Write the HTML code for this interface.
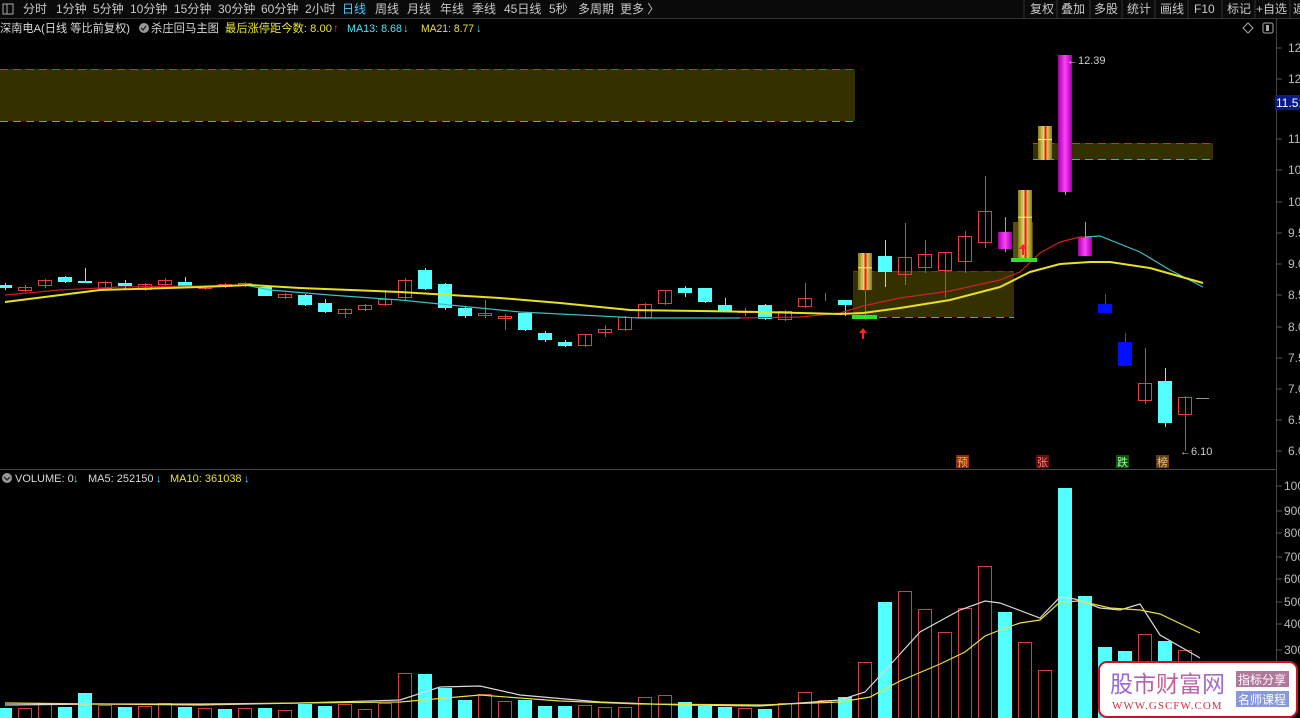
<!DOCTYPE html>
<html><head><meta charset="utf-8"><style>
html,body{margin:0;padding:0;background:#000;width:1300px;height:718px;overflow:hidden;font-family:"Liberation Sans","Noto Sans CJK SC",sans-serif;}
svg{position:absolute;left:0;top:0}
.t{font-family:"Liberation Sans","Noto Sans CJK SC",sans-serif;}
</style></head><body>
<svg id="s" width="1300" height="718" xmlns="http://www.w3.org/2000/svg">
<defs>
<linearGradient id="yg" x1="0" x2="1" y1="0" y2="0"><stop offset="0" stop-color="#8a7a18"/><stop offset="0.5" stop-color="#f6ec80"/><stop offset="1" stop-color="#8a7a18"/></linearGradient>
<linearGradient id="mg" x1="0" x2="1" y1="0" y2="0"><stop offset="0" stop-color="#a000a0"/><stop offset="0.5" stop-color="#ff40ff"/><stop offset="1" stop-color="#a000a0"/></linearGradient>
<linearGradient id="lg" x1="0" x2="1" y1="0" y2="0"><stop offset="0" stop-color="#8a6ae0"/><stop offset="0.5" stop-color="#c86090"/><stop offset="1" stop-color="#9a70d0"/></linearGradient>
</defs>
<rect x="0" y="0" width="1300" height="18" fill="#0a0a0a"/>
<line x1="0" y1="18.5" x2="1300" y2="18.5" stroke="#333"/>
<rect x="3" y="4" width="10" height="10" fill="none" stroke="#aaa"/><line x1="7" y1="4" x2="7" y2="14" stroke="#aaa"/>
<g class="t" font-size="12" fill="#c8c8c8">
<text x="23" y="13">分时</text><text x="56" y="13">1分钟</text><text x="93" y="13">5分钟</text><text x="130" y="13">10分钟</text><text x="174" y="13">15分钟</text><text x="218" y="13">30分钟</text><text x="261" y="13">60分钟</text><text x="305" y="13">2小时</text>
<text x="342" y="13" fill="#4fc8ff">日线</text><text x="375" y="13">周线</text><text x="407" y="13">月线</text><text x="440" y="13">年线</text><text x="472" y="13">季线</text><text x="504" y="13">45日线</text><text x="549" y="13">5秒</text><text x="578" y="13">多周期</text><text x="620" y="13">更多 〉</text>
<text x="1030" y="13">复权</text><text x="1061" y="13">叠加</text><text x="1094" y="13">多股</text><text x="1127" y="13">统计</text><text x="1160" y="13">画线</text><text x="1194" y="13">F10</text><text x="1227" y="13">标记</text><text x="1256" y="13">+自选</text><text x="1293" y="13">返</text>
</g>
<g stroke="#333"><line x1="1024" y1="0" x2="1024" y2="18"/><line x1="1057" y1="0" x2="1057" y2="18"/><line x1="1090" y1="0" x2="1090" y2="18"/><line x1="1122" y1="0" x2="1122" y2="18"/><line x1="1155" y1="0" x2="1155" y2="18"/><line x1="1188" y1="0" x2="1188" y2="18"/><line x1="1222" y1="0" x2="1222" y2="18"/><line x1="1255" y1="0" x2="1255" y2="18"/><line x1="1290" y1="0" x2="1290" y2="18"/></g>
<g class="t" font-size="11.3">
<text x="0" y="32" fill="#d8d8d8" textLength="130" lengthAdjust="spacingAndGlyphs">深南电A(日线 等比前复权)</text>
<circle cx="144" cy="28" r="5" fill="#999"/><path d="M141 28 l2 2 l3 -4" stroke="#222" fill="none" stroke-width="1.3"/>
<text x="151" y="32" fill="#d8d8d8" textLength="68" lengthAdjust="spacingAndGlyphs">杀庄回马主图</text>
<text x="225" y="32" fill="#e6e040" textLength="107" lengthAdjust="spacingAndGlyphs">最后涨停距今数: 8.00</text><text x="333" y="32" fill="#ff3030">↑</text>
<text x="347" y="32" fill="#54e0f0" textLength="55" lengthAdjust="spacingAndGlyphs">MA13: 8.68</text><text x="403" y="32" fill="#54e0f0">↓</text>
<text x="421" y="32" fill="#e6e040" textLength="53" lengthAdjust="spacingAndGlyphs">MA21: 8.77</text><text x="476" y="32" fill="#54e0f0">↓</text>
</g>
<path d="M1248 23 l5 5 l-5 5 l-5 -5z" fill="none" stroke="#aaa"/>
<rect x="1263" y="23" width="10" height="10" rx="2" fill="none" stroke="#aaa"/><rect x="1266" y="25" width="3" height="6" fill="#aaa"/>
<line x1="1276.5" y1="19" x2="1276.5" y2="718" stroke="#444"/>
<line x1="0" y1="469.5" x2="1276" y2="469.5" stroke="#444"/>
<g id="ax" class="t" font-size="12" fill="#bbb"></g>
<rect x="1275" y="95" width="25" height="15" fill="#0a1a8a"/><text x="1276" y="107" class="t" font-size="12" fill="#fff">11.51</text>
<rect x="0" y="69" width="855" height="52" fill="#353000"/>
<line x1="0" y1="69.5" x2="855" y2="69.5" stroke="#d03030" stroke-dasharray="8,5"/>
<line x1="0" y1="121.5" x2="855" y2="121.5" stroke="#3cb0b0" stroke-dasharray="8,5"/>
<rect x="853" y="271" width="161" height="46" fill="#353000"/>
<line x1="853" y1="271.5" x2="1014" y2="271.5" stroke="#803020" stroke-dasharray="8,5"/>
<line x1="853" y1="317.5" x2="1014" y2="317.5" stroke="#3cb0b0" stroke-dasharray="8,5"/>
<rect x="1033" y="143" width="180" height="17" fill="#353000"/>
<line x1="1033" y1="143.5" x2="1213" y2="143.5" stroke="#d03030" stroke-dasharray="8,5"/>
<line x1="1033" y1="159.5" x2="1213" y2="159.5" stroke="#3cb0b0" stroke-dasharray="8,5"/>
<rect x="1013" y="222" width="20" height="36" fill="#5a4a10"/>
<g id="cd"></g>
<g id="ma"></g>
<g id="vol"></g>
<rect x="852" y="315" width="25" height="4" fill="#30e030"/>
<rect x="1011" y="258" width="26" height="4" fill="#30e030"/>
<path d="M863 328 l-4 5 h3 v6 h2 v-6 h3z" fill="#ff2020"/>
<path d="M1023 244 l-4 5 h3 v6 h2 v-6 h3z" fill="#ff2020"/>
<line x1="1196" y1="398.5" x2="1209" y2="398.5" stroke="#999"/>
<text x="1067" y="64" class="t" font-size="11" fill="#ccc">←12.39</text>
<text x="1180" y="455" class="t" font-size="11" fill="#ccc">←6.10</text>
<g class="t" font-size="11">
<rect x="956" y="455" width="13" height="13" fill="#8a3010"/><text x="957" y="466" fill="#ffb060">预</text>
<rect x="1036" y="455" width="13" height="13" fill="#601010"/><text x="1037" y="466" fill="#ff8080">张</text>
<rect x="1116" y="455" width="13" height="13" fill="#105010"/><text x="1117" y="466" fill="#a0ffa0">跌</text>
<rect x="1156" y="455" width="13" height="13" fill="#604010"/><text x="1157" y="466" fill="#ffc080">榜</text>
</g>
<g class="t" font-size="11">
<circle cx="7" cy="478" r="5" fill="#999"/><path d="M4 477 l3 3 l3 -3" stroke="#222" fill="none" stroke-width="1.3"/>
<text x="15" y="482" fill="#d8d8d8">VOLUME: 0</text><text x="73" y="482" fill="#54e0f0">↓</text>
<text x="88" y="482" fill="#d8d8d8">MA5: 252150</text><text x="156" y="482" fill="#54e0f0">↓</text>
<text x="170" y="482" fill="#e6e040">MA10: 361038</text><text x="244" y="482" fill="#54e0f0">↓</text>
</g>
<rect x="1099" y="662" width="198" height="55" rx="8" fill="#fff" stroke="#d01020" stroke-width="2"/>
<text x="1110" y="692" font-family="'Noto Sans CJK SC',sans-serif" font-size="23" fill="url(#lg)">股市财富网</text>
<text x="1112" y="709" font-family="'Liberation Serif',serif" font-size="11" fill="#d03040" letter-spacing="1">WWW.GSCFW.COM</text>
<rect x="1236" y="671" width="53" height="16" fill="#b0789c"/><text x="1238" y="684" font-family="'Noto Sans CJK SC',sans-serif" font-size="12" fill="#fff">指标分享</text>
<rect x="1236" y="691" width="53" height="16" fill="#8898dc"/><text x="1238" y="704" font-family="'Noto Sans CJK SC',sans-serif" font-size="12" fill="#fff">名师课程</text>
</svg>
<script>
var NS="http://www.w3.org/2000/svg";
function el(p,t,a){var e=document.createElementNS(NS,t);for(var k in a)e.setAttribute(k,a[k]);document.getElementById(p).appendChild(e);return e;}
var al=[[52,"12.50"],[83,"12.00"],[143,"11.00"],[174,"10.50"],[206,"10.00"],[237,"9.50"],[268,"9.00"],[299,"8.50"],[331,"8.00"],[362,"7.50"],[393,"7.00"],[424,"6.50"],[455,"6.00"]];
al.forEach(function(a){el("ax","line",{x1:1276,y1:a[0]-4,x2:1282,y2:a[0]-4,stroke:"#555"});var t=el("ax","text",{x:a[1].length>4?1288:1288,y:a[0]});t.textContent=a[1];});
var vl=[[490,"1000"],[515,"900"],[537,"800"],[561,"700"],[583,"600"],[606,"500"],[628,"400"],[654,"300"]];
vl.forEach(function(a){el("ax","line",{x1:1276,y1:a[0]-4,x2:1282,y2:a[0]-4,stroke:"#555"});var t=el("ax","text",{x:1284,y:a[0]});t.textContent=a[1];});
var C=[[0,285,288,283,290,"c"],[1,287,291,285,292,"r"],[2,280,286,279,288,"r"],[3,277,282,276,283,"c"],[4,281,283,268,283,"c"],[5,282,289,281,290,"r"],[6,283,286,280,289,"c"],[7,284,290,283,291,"r"],[8,280,285,278,286,"r"],[9,282,286,277,288,"c"],[10,286,289,285,290,"r"],[11,284,287,283,288,"r"],[12,283,286,282,287,"r"],[13,287,296,285,296,"c"],[14,294,298,293,299,"r"],[15,295,305,294,306,"c"],[16,303,312,299,313,"c"],[17,309,314,308,318,"r"],[18,305,310,304,311,"r"],[19,299,305,290,306,"r"],[20,280,298,278,301,"r"],[21,270,289,268,290,"c"],[22,284,308,283,310,"c"],[23,308,316,307,318,"c"],[24,313,316,300,318,"r"],[25,316,319,314,330,"r"],[26,313,330,312,331,"c"],[27,333,340,331,342,"c"],[28,342,346,340,347,"c"],[29,334,346,334,347,"r"],[30,329,333,325,337,"r"],[31,317,330,316,331,"r"],[32,304,318,303,319,"r"],[33,290,304,290,305,"r"],[34,288,293,286,297,"c"],[35,288,302,288,303,"c"],[36,305,311,298,312,"c"],[37,311,313,308,316,"r"],[38,305,319,304,320,"c"],[39,311,320,310,321,"r"],[40,298,307,283,308,"r"],[41,296,297,293,301,"r"],[42,300,305,300,316,"c"],[43,253,290,253,320,"y"],[44,256,272,240,287,"c"],[45,257,275,223,285,"r"],[46,254,268,240,273,"r"],[47,252,271,252,298,"r"],[48,236,262,231,273,"r"],[49,211,243,176,248,"r"],[50,232,249,217,252,"m"],[51,190,258,190,258,"y"],[52,126,160,126,160,"y"],[53,55,192,55,195,"m"],[54,237,256,222,256,"m"],[55,304,313,294,313,"b"],[56,342,366,333,366,"b"],[57,383,401,348,404,"r"],[58,381,423,368,427,"c"],[59,397,415,396,451,"r"]];
var col={c:"#54ffff",r:"#e04040",m:"#ff30ff",b:"#0010ff",y:"#e8d050"};
C.forEach(function(c){var x=5+20*c[0];
 var wc=c[5]=="c"?"#54ffff":c[5]=="r"?"#e04040":c[5]=="b"?"#3040ff":c[5]=="m"?"#ff60ff":"#e04040";
 el("cd","line",{x1:x+0.5,y1:c[3],x2:x+0.5,y2:c[4],stroke:wc});
 var h=Math.max(1,c[2]-c[1]);
 if(c[5]=="r") el("cd","rect",{x:x-6.5,y:c[1]+0.5,width:13,height:h-1,fill:"none",stroke:"#e04040"});
 else if(c[5]=="y"){el("cd","rect",{x:x-7,y:c[1],width:14,height:h,fill:"url(#yg)"});el("cd","line",{x1:x+0.5,y1:c[1],x2:x+0.5,y2:c[2],stroke:"#ff1010","stroke-width":2});el("cd","line",{x1:x-7,y1:c[1]+h*0.4,x2:x+7,y2:c[1]+h*0.4,stroke:"#fff080"});}
 else if(c[5]=="m") el("cd","rect",{x:x-7,y:c[1],width:14,height:h,fill:"url(#mg)"});
 else el("cd","rect",{x:x-7,y:c[1],width:14,height:h,fill:col[c[5]]});
});
function pl(g,pts,st,w){el(g,"polyline",{points:pts.map(function(p){return p.join(",")}).join(" "),fill:"none",stroke:st,"stroke-width":w});}
pl("ma",[[5,295],[60,290],[120,287],[200,286],[245,285]],"#c02020",1.2);
pl("ma",[[245,285],[270,290],[330,295],[400,300],[450,305],[520,312],[560,314],[640,318],[700,318],[740,318]],"#3cc0c0",1.2);
pl("ma",[[740,318],[800,317],[840,313],[863,306],[900,298],[950,291],[1000,280],[1020,272],[1040,253],[1060,242],[1080,237],[1085,237]],"#d02020",1.2);
pl("ma",[[1085,237],[1100,236],[1140,252],[1170,270],[1203,287]],"#3cc0c0",1.2);
pl("ma",[[5,302],[100,290],[200,287],[250,285],[300,288],[400,292],[500,298],[560,303],[630,310],[700,311],[760,312],[840,314],[863,313],[900,308],[950,300],[1000,287],[1030,272],[1060,264],[1090,262],[1110,262],[1150,268],[1203,283]],"#e8e020",2);
var V=[708,708,703,707,693,705,707,706,703,707,708,709,708,708,710,704,706,704,709,703,673,674,688,700,694,701,700,706,706,705,707,707,697,695,702,706,707,708,709,703,692,700,697,662,602,591,609,632,608,566,612,642,670,488,596,647,651,634,641,650];
var VT=[0,1,1,0,0,1,0,1,1,0,1,0,1,0,1,0,0,1,1,1,1,0,0,0,1,1,0,0,0,1,1,1,1,1,0,0,0,1,0,1,1,1,0,1,0,1,1,1,1,1,0,1,1,0,0,0,0,1,0,1];
V.forEach(function(v,k){var x=5+20*k;if(VT[k])el("vol","rect",{x:x-6.5,y:v+0.5,width:13,height:718-v,fill:"none",stroke:"#d04040"});else el("vol","rect",{x:x-7,y:v,width:14,height:718-v,fill:"#54ffff"});});
pl("vol",[[5,705],[100,704],[200,705],[300,703],[400,700],[440,687],[480,686],[520,695],[600,702],[680,705],[760,706],[800,703],[840,700],[865,692],[890,665],[920,632],[960,610],[985,601],[1000,603],[1040,618],[1060,597],[1075,599],[1100,608],[1120,610],[1140,604],[1160,635],[1200,658]],"#d8d8d8",1.2);
pl("vol",[[5,703],[100,704],[200,704],[300,703],[400,702],[480,695],[560,701],[640,704],[760,705],[840,702],[870,697],[900,681],[940,664],[965,652],[985,636],[1000,630],[1020,623],[1040,620],[1060,602],[1080,601],[1110,608],[1140,610],[1160,614],[1200,633]],"#e8e040",1.2);
</script>
</body></html>
